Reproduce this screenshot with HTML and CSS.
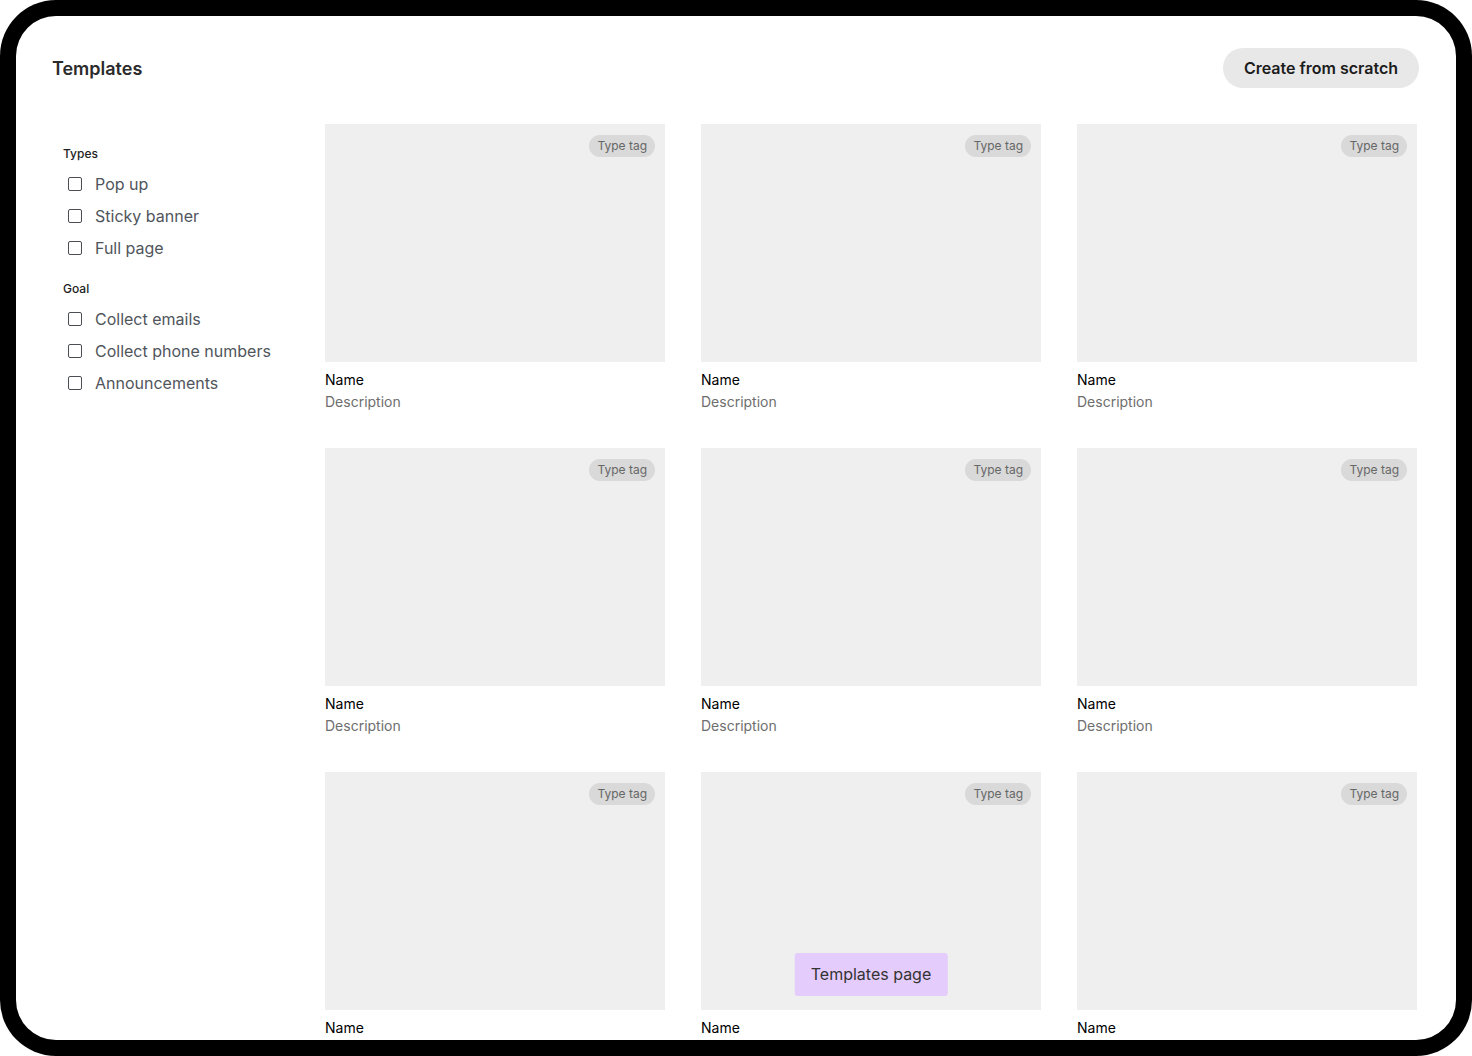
FILE: index.html
```html
<!DOCTYPE html>
<html lang="en">
<head>
    <meta charset="UTF-8">
    <meta name="viewport" content="width=device-width, initial-scale=1.0">
    <title>Templates</title>
    <link rel="stylesheet" href="styles.css">
</head>
<body>

    <div class="device">
        <div class="screen">
            <header class="top-bar">
                <h1>Templates</h1>
                <button class="btn-scratch">Create from scratch</button>
            </header>

            <div class="main">
                <aside class="filters">
                    <div class="filter-group">
                        <p class="filter-title">Types</p>
                        <label class="check"><span class="box"></span>Pop up</label>
                        <label class="check"><span class="box"></span>Sticky banner</label>
                        <label class="check"><span class="box"></span>Full page</label>
                    </div>
                    <div class="filter-group">
                        <p class="filter-title">Goal</p>
                        <label class="check"><span class="box"></span>Collect emails</label>
                        <label class="check"><span class="box"></span>Collect phone numbers</label>
                        <label class="check"><span class="box"></span>Announcements</label>
                    </div>
                </aside>

                <section class="grid">
                    <div class="card">
                        <div class="thumb"><span class="tag">Type tag</span></div>
                        <p class="name">Name</p>
                        <p class="desc">Description</p>
                    </div>
                    <div class="card">
                        <div class="thumb"><span class="tag">Type tag</span></div>
                        <p class="name">Name</p>
                        <p class="desc">Description</p>
                    </div>
                    <div class="card">
                        <div class="thumb"><span class="tag">Type tag</span></div>
                        <p class="name">Name</p>
                        <p class="desc">Description</p>
                    </div>
                    <div class="card">
                        <div class="thumb"><span class="tag">Type tag</span></div>
                        <p class="name">Name</p>
                        <p class="desc">Description</p>
                    </div>
                    <div class="card">
                        <div class="thumb"><span class="tag">Type tag</span></div>
                        <p class="name">Name</p>
                        <p class="desc">Description</p>
                    </div>
                    <div class="card">
                        <div class="thumb"><span class="tag">Type tag</span></div>
                        <p class="name">Name</p>
                        <p class="desc">Description</p>
                    </div>
                    <div class="card">
                        <div class="thumb"><span class="tag">Type tag</span></div>
                        <p class="name">Name</p>
                    </div>
                    <div class="card">
                        <div class="thumb">
                            <span class="tag">Type tag</span>
                            <span class="page-label">Templates page</span>
                        </div>
                        <p class="name">Name</p>
                    </div>
                    <div class="card">
                        <div class="thumb"><span class="tag">Type tag</span></div>
                        <p class="name">Name</p>
                    </div>
                </section>
            </div>
        </div>
    </div>

</body>
</html>
```

FILE: styles.css
```css
* {
    box-sizing: border-box;
}
body {
    margin: 0;
    background: #fff;
    font-family: Inter, "Noto Sans", Arial, sans-serif;
}
.device {
    width: 1472px;
    height: 1056px;
    background: #000;
    border-radius: 56px;
    padding: 16px;
}
.screen {
    height: 100%;
    background: #fff;
    border-radius: 40px;
    overflow: hidden;
}
.top-bar {
    display: flex;
    justify-content: space-between;
    align-items: center;
    padding: 32px 37px 0 36px;
}
.top-bar h1 {
    margin: 0;
    font-size: 18px;
    font-weight: 600;
    color: #2b2b2b;
}
.btn-scratch {
    height: 40px;
    padding: 0 21px;
    border: none;
    border-radius: 20px;
    background: #e8e8e8;
    font-family: inherit;
    font-size: 16px;
    font-weight: 600;
    color: #1c1c1c;
    cursor: pointer;
}
.main {
    display: flex;
    padding: 36px 0 0 47px;
}
.filters {
    width: 262px;
    flex-shrink: 0;
    padding-top: 22px;
}
.filter-group {
    display: flex;
    flex-direction: column;
    gap: 8px;
    margin-bottom: 21px;
}
.filter-title {
    margin: 0 0 2px;
    font-size: 12px;
    line-height: 16px;
    font-weight: 500;
    color: #222;
}
.check {
    display: flex;
    align-items: center;
    gap: 13px;
    padding-left: 5px;
    font-size: 16px;
    line-height: 24px;
    color: #50555c;
}
.box {
    width: 14px;
    height: 14px;
    border: 1.5px solid #4a4d52;
    border-radius: 2px;
}
.grid {
    display: grid;
    grid-template-columns: repeat(3, 340px);
    column-gap: 36px;
    row-gap: 36px;
}
.card p {
    margin: 0;
    font-size: 14px;
    line-height: 20px;
}
.thumb {
    position: relative;
    height: 238px;
    background: #efefef;
    margin-bottom: 8px;
}
.tag {
    position: absolute;
    top: 11px;
    right: 10px;
    height: 22px;
    line-height: 22px;
    padding: 0 8px;
    border-radius: 11px;
    background: #d9d9d9;
    font-size: 12px;
    color: #666;
}
.page-label {
    position: absolute;
    bottom: 14px;
    left: 50%;
    transform: translateX(-50%);
    padding: 0 16px;
    height: 43px;
    line-height: 43px;
    background: #e4ccfd;
    border-radius: 3px;
    font-size: 16px;
    color: #333;
    white-space: nowrap;
}
.name {
    color: #000;
    font-weight: 400;
}
.desc {
    margin-top: 2px !important;
    color: #6e6e6e;
}
```
